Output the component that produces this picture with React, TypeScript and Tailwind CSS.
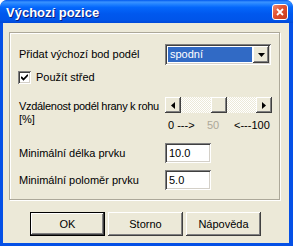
const raised =
  'shadow-[inset_-1px_-1px_#404040,inset_1px_1px_#ffffff,inset_-2px_-2px_#808080,inset_2px_2px_#ECE9D8]';
const sunken =
  'shadow-[inset_1px_1px_#808080,inset_-1px_-1px_#ffffff,inset_2px_2px_#404040,inset_-2px_-2px_#D4D0C8]';

function Arrow({ dir }: { dir: 'left' | 'right' | 'down' }) {
  if (dir === 'down')
    return (
      <svg width="7" height="4" viewBox="0 0 7 4">
        <path d="M0 0h7L3.5 4z" fill="#000" />
      </svg>
    );
  return (
    <svg width="4" height="7" viewBox="0 0 4 7">
      <path d={dir === 'left' ? 'M4 0v7L0 3.5z' : 'M0 0v7l4-3.5z'} fill="#000" />
    </svg>
  );
}

function Btn({ label, isDefault }: { label: string; isDefault?: boolean }) {
  return (
    <div
      className={`w-[75px] h-[24px] flex items-center justify-center bg-[#ECE9D8] ${
        isDefault ? 'border border-black' : ''
      }`}
    >
      <div className={`w-full h-full flex items-center justify-center ${raised}`}>{label}</div>
    </div>
  );
}

export default function App() {
  return (
    <div className="w-[293px] h-[246px] bg-[#0550E6] rounded-t-[7px] flex flex-col overflow-hidden font-['Liberation_Sans',Arial,sans-serif] text-[11px] leading-[13px] text-black">
      {/* title bar */}
      <div className="h-[23px] shrink-0 flex items-center justify-between pl-[6px] pr-[5px] rounded-t-[7px] bg-[linear-gradient(to_bottom,#0058EE_0%,#3A93FF_9%,#2283FF_18%,#0467FB_32%,#0058EE_60%,#0055EA_85%,#0048D8_100%)]">
        <span className="pt-[1px] text-white font-bold text-[13px] leading-[15px] [text-shadow:1px_1px_#0A1E80]">
          Výchozí pozice
        </span>
        <div className="w-[16px] h-[16px] rounded-[3px] border border-white bg-[linear-gradient(135deg,#F08A70_0%,#E0502F_45%,#C53A1C_100%)] flex items-center justify-center">
          <svg width="8" height="8" viewBox="0 0 8 8">
            <path d="M1 1l6 6M7 1L1 7" stroke="#fff" strokeWidth="1.8" />
          </svg>
        </div>
      </div>

      {/* body */}
      <div className="flex-1 ml-[3px] mr-[4px] mb-[3px] bg-[#ECE9D8] flex flex-col">
        <div className="ml-[6px] mt-[9px] w-[271px] h-[168px] border border-[#ACA899] shadow-[inset_1px_1px_#ffffff,1px_1px_#ffffff] flex flex-col pt-[11px]">
          {/* combo row */}
          <div className="flex items-center">
            <span className="pl-[9px] w-[155px]">Přidat výchozí bod podél</span>
            <div className={`w-[106px] h-[21px] bg-white p-[2px] flex ${sunken}`}>
              <div className="flex-1 m-[1px] bg-[#316AC5] text-white pl-[2px] flex items-center">spodní</div>
              <div className={`w-[16px] bg-[#ECE9D8] flex items-center justify-center ${raised}`}>
                <Arrow dir="down" />
              </div>
            </div>
          </div>

          {/* checkbox */}
          <div className="flex items-center mt-[6px] pl-[8px]">
            <div className={`w-[13px] h-[13px] bg-white flex items-center justify-center ${sunken}`}>
              <svg width="7" height="7" viewBox="0 0 7 7">
                <path d="M0 3l2.5 2.5L7 0.8" stroke="#000" strokeWidth="1.8" fill="none" />
              </svg>
            </div>
            <span className="ml-[5px]">Použít střed</span>
          </div>

          {/* slider row */}
          <div className="flex mt-[13px]">
            <span className="pl-[9px] w-[155px] mt-[3px]">
              <span className="whitespace-nowrap tracking-[-0.3px]">Vzdálenost podél hrany k rohu</span>
              <br />
              [%]
            </span>
            <div className="flex flex-col w-[107px]">
              <div className="h-[16px] flex">
                <div className={`w-[16px] bg-[#ECE9D8] flex items-center justify-center ${raised}`}>
                  <Arrow dir="left" />
                </div>
                <div className="flex-1 flex bg-[repeating-conic-gradient(#ffffff_0_25%,#ECE9D8_0_50%)] bg-size-[2px_2px]">
                  <div className="w-[30px]" />
                  <div className={`w-[16px] bg-[#ECE9D8] ${raised}`} />
                </div>
                <div className={`w-[16px] bg-[#ECE9D8] flex items-center justify-center ${raised}`}>
                  <Arrow dir="right" />
                </div>
              </div>
              <div className="flex mt-[6px] pl-[3px]">
                <span className="w-[39px]">0 ---&gt;</span>
                <span className="w-[27px] text-[#ACA899]">50</span>
                <span>&lt;---100</span>
              </div>
            </div>
          </div>

          {/* min length */}
          <div className="flex items-center mt-[11px]">
            <span className="pl-[9px] w-[155px]">Minimální délka prvku</span>
            <div className={`w-[46px] h-[20px] bg-white pl-[4px] flex items-center ${sunken}`}>10.0</div>
          </div>

          {/* min radius */}
          <div className="flex items-center mt-[7px]">
            <span className="pl-[9px] w-[155px]">Minimální poloměr prvku</span>
            <div className={`w-[46px] h-[20px] bg-white pl-[4px] flex items-center ${sunken}`}>5.0</div>
          </div>
        </div>

        {/* buttons */}
        <div className="flex gap-[3px] ml-[27px] mt-[12px]">
          <Btn label="OK" isDefault />
          <Btn label="Storno" />
          <Btn label="Nápověda" />
        </div>
      </div>
    </div>
  );
}
